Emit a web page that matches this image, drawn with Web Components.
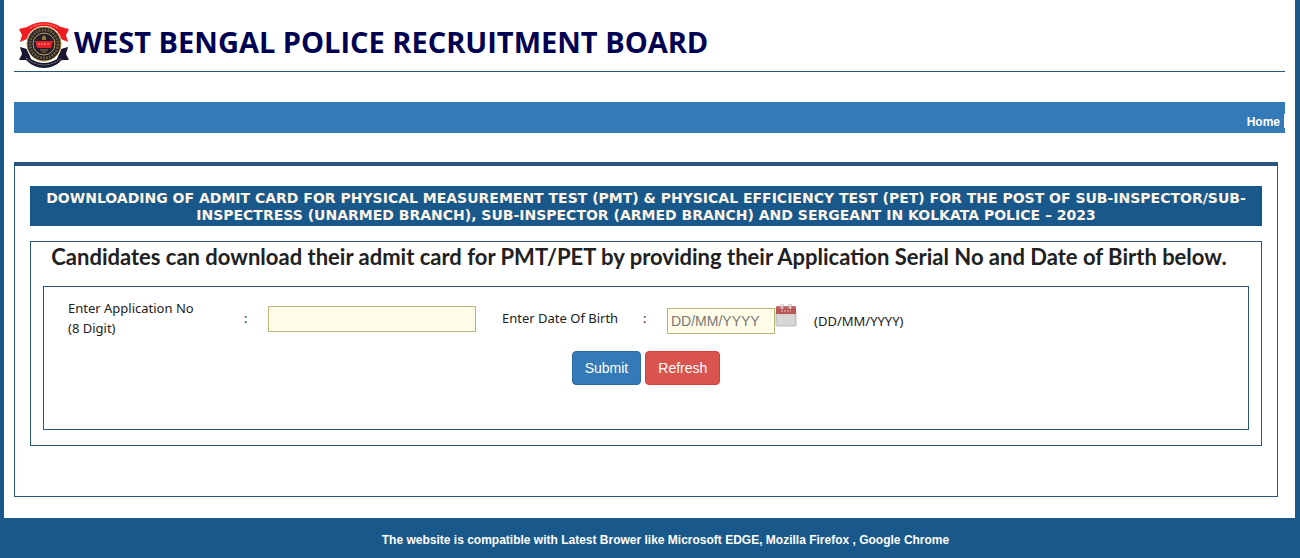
<!DOCTYPE html>
<html lang="en">
<head>
<meta charset="utf-8">
<meta name="viewport" content="width=device-width, initial-scale=1">
<title>West Bengal Police Recruitment Board</title>
<style>
html{background:#19588a}
body{margin:0;font-family:"Liberation Sans",Arial,sans-serif;font-size:12px;color:#212121;--navy:#19588a;--line:#29567f;--blue:#337ab7}
</style>
</head>
<body>
<board-page>
  <board-header slot="header">WEST BENGAL POLICE RECRUITMENT BOARD</board-header>
  <board-nav slot="nav"></board-nav>
  <board-panel>
    <span slot="title">DOWNLOADING OF ADMIT CARD FOR PHYSICAL MEASUREMENT TEST (PMT) &amp; PHYSICAL EFFICIENCY TEST (PET) FOR THE POST OF SUB-INSPECTOR/SUB-INSPECTRESS (UNARMED BRANCH), SUB-INSPECTOR (ARMED BRANCH) AND SERGEANT IN KOLKATA POLICE – 2023</span>
    <span slot="hint">Candidates can download their admit card for PMT/PET by providing their Application Serial No and Date of Birth below.</span>
    <admit-form></admit-form>
  </board-panel>
  <span slot="footer">The website is compatible with Latest Brower like Microsoft EDGE, Mozilla Firefox , Google Chrome</span>
</board-page>
<script>
function define(name, html){
  const t=document.createElement('template');
  t.innerHTML=html;
  customElements.define(name,class extends HTMLElement{
    constructor(){
      super();
      this.attachShadow({mode:'open'}).append(t.content.cloneNode(true));
    }
  });
}

define('board-page',`
<style>
:host{display:block}
.sheet{background:#fff;margin:0 5px 0 4px;padding:20px 10px 21px}
footer{background:var(--navy);color:#fff;font-weight:bold;text-align:center;line-height:16px;padding:14px 0 10px 31px}
</style>
<div class="sheet">
  <slot name="header"></slot>
  <slot name="nav"></slot>
  <main><slot></slot></main>
</div>
<footer><slot name="footer"></slot></footer>`);

define('board-logo',`
<style>:host{display:block}svg{display:block}</style>
<svg width="52" height="50" viewBox="0 0 52 50" role="img" aria-label="Board emblem">
  <path d="M2 26L9 28L13 38Q26 46 39 38L43 28L50 26L48 33L51 39L44 39Q36 47 26 47Q16 47 8 39L1 39L4 33Z" fill="#17182f"/>
  <path d="M1 8L9 6Q26 -4 43 6L51 8L48 14L50 21L43 18L38 10Q26 4 14 10L9 18L2 21L4 14Z" fill="#f01c20"/>
  <circle cx="26" cy="23" r="18" fill="#fff"/>
  <circle cx="26" cy="23" r="17" fill="#19182b" stroke="#c5a049"/>
  <circle cx="26" cy="23" r="14" fill="none" stroke="#6d5a38" stroke-width="3" stroke-dasharray="2 1"/>
  <circle cx="26" cy="23" r="11" fill="#25202c" stroke="#c9a95c"/>
  <path d="M17 20H35L33 27H19Z" fill="#e82028"/>
  <path d="M20 23H32" stroke="#f3b0a0" stroke-dasharray="2 1"/>
  <path d="M24 19V16L26 14L28 16V19Z" fill="#8f7740"/>
  <path d="M22 29H30M24 31H28" stroke="#8f7740"/>
  <path d="M12 7Q26 -1 40 7" fill="none" stroke="#ff9b91" stroke-dasharray="2 1"/>
  <path d="M8 37Q26 51 44 37" fill="none" stroke="#8b8b96" stroke-dasharray="2 1"/>
</svg>`);

define('board-header',`
<style>
:host{display:block}
header{display:flex;align-items:center;gap:4px;padding-left:4px;height:51px;border-bottom:1px solid var(--line)}
h1{margin:0;padding-bottom:8px;font:bold 29px/40px "Open Sans","Noto Sans",sans-serif;color:#000052;white-space:nowrap}
</style>
<header><board-logo></board-logo><h1><slot></slot></h1></header>`);

define('board-nav',`
<style>
:host{display:block;margin-top:30px}
nav{display:flex;justify-content:flex-end;align-items:flex-end;background:var(--blue);height:31px}
a{color:#fff;font-weight:bold;text-decoration:none;line-height:14px;padding:0 4px 4px 0}
i{width:1px;height:14px;background:#fff;margin-bottom:5px}
</style>
<nav><a href="#">Home</a><i></i></nav>`);

define('board-panel',`
<style>
:host{display:block;margin:29px 7px 0 0;border:1px solid var(--line);border-top-width:4px;padding:20px 15px 50px}
h2{margin:0 0 15px;padding:4px 2px 2px;background:var(--navy);color:#fff5e6;text-align:center;font:bold 14px/17px Verdana,"DejaVu Sans",sans-serif}
section{border:1px solid var(--line);padding:0 12px 15px}
h3{margin:0;font:bold 22px/30px Lato,Carlito,sans-serif;color:#212121;text-align:center;padding:0 14px 14px 0}
</style>
<h2><slot name="title"></slot></h2>
<section><h3><slot name="hint"></slot></h3><slot></slot></section>`);

define('calendar-icon',`
<style>:host{display:block}svg{display:block}</style>
<svg width="22" height="23" viewBox="0 0 22 23" aria-hidden="true">
  <path d="M1 9H21V21Q21 22 20 22H2Q1 22 1 21Z" fill="#d2d2d2" stroke="#bbb"/>
  <path d="M1 3Q1 2 2 2H20Q21 2 21 3V10H1Z" fill="#ba565a"/>
  <path d="M1 3H21" stroke="#cd8587"/>
  <path d="M6 7H16" stroke="#e7bcbc" stroke-dasharray="2 1"/>
  <path d="M3 12H19M3 14H19M3 16H19M3 18H19M3 20H19" stroke="#e4e4e4" stroke-dasharray="1 1"/>
  <path d="M6 0V5M8 0V5M14 0V5M16 0V5" stroke="#b9b0b0"/>
  <path d="M7 1V5M15 1V5" stroke="#eee"/>
</svg>`);

define('admit-form',`
<style>
:host{display:block;border:1px solid var(--line)}
form{padding:11px 24px 44px;font:13px/20px "Noto Sans",sans-serif;color:#212121}
.row{display:grid;grid-template-columns:176px 24px 234px 141px 24px 108px 39px 1fr;align-items:center}
label,span{padding-bottom:2px}
input{box-sizing:border-box;height:26px;border:1px solid #bab57c;background:#fffde7;font:14px "Liberation Sans",Arial,sans-serif;padding:0 3px;margin:0;border-radius:0}
input::placeholder{color:#777;opacity:1}
#app{width:208px}
#dob{width:108px;margin-top:4px}
.pick{border:0;background:none;padding:0;width:22px;cursor:pointer;align-self:start;margin-top:6px}
.fmt{padding-top:5px}
.actions{display:flex;justify-content:center;gap:4px;margin-top:11px}
.btn{box-sizing:border-box;height:34px;border-radius:4px;color:#fff;font:14px/20px "Liberation Sans",Arial,sans-serif;padding:6px 12px;border:1px solid}
.go{background:#337ab7;border-color:#2e6da4}
.reset{background:#d9534f;border-color:#d43f3a}
</style>
<form>
  <div class="row">
    <label for="app">Enter Application No<br>(8 Digit)</label><span>:</span>
    <input id="app" type="text" maxlength="8">
    <label for="dob">Enter Date Of Birth</label><span>:</span>
    <input id="dob" type="text" placeholder="DD/MM/YYYY">
    <button class="pick" type="button" aria-label="Choose date"><calendar-icon></calendar-icon></button>
    <span class="fmt">(DD/MM/YYYY)</span>
  </div>
  <div class="actions"><button class="btn go" type="button">Submit</button><button class="btn reset" type="reset">Refresh</button></div>
</form>`);
</script>
</body>
</html>
